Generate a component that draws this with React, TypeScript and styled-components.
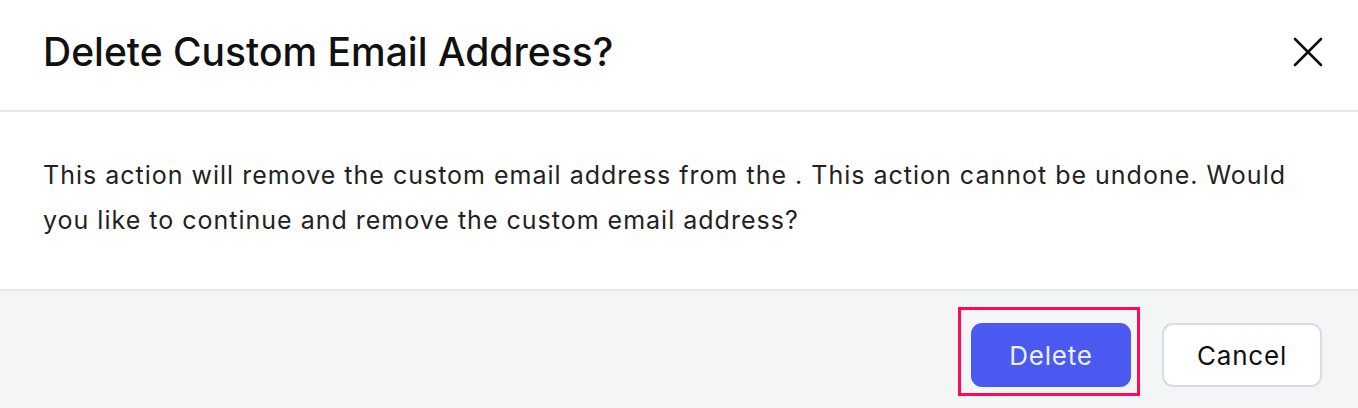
import React from "react";
import styled, { createGlobalStyle } from "styled-components";

const Global = createGlobalStyle`
  html, body { margin: 0; padding: 0; background: #ffffff; }
  body { font-family: Inter, "Noto Sans", sans-serif; -webkit-font-smoothing: antialiased; }
`;

const Dialog = styled.div`
  width: 1358px;
  height: 408px;
  overflow: hidden;
  background: #ffffff;
  display: flex;
  flex-direction: column;
`;

const Header = styled.header`
  height: 112px;
  box-sizing: border-box;
  display: flex;
  align-items: center;
  justify-content: space-between;
  padding: 0 34px 7px 43px;
  border-bottom: 2px solid #e8e8ee;
  flex-shrink: 0;
`;

const Title = styled.h2`
  margin: 0;
  font-family: Inter, "Noto Sans", sans-serif;
  font-weight: 500;
  font-size: 39px;
  letter-spacing: 0;
  color: #111111;
`;

const CloseButton = styled.button`
  width: 32px;
  height: 32px;
  padding: 0;
  border: 0;
  background: transparent;
  display: flex;
  align-items: center;
  justify-content: center;
  cursor: pointer;
  color: #111111;
`;

const Body = styled.div`
  height: 177px;
  box-sizing: border-box;
  padding: 41px 40px 0 43px;
  flex-shrink: 0;
`;

const Message = styled.p`
  margin: 0;
  font-family: Inter, "Noto Sans", sans-serif;
  font-size: 25px;
  line-height: 45px;
  color: #222222;
  letter-spacing: 1px;
`;

const Footer = styled.footer`
  flex: 1;
  background: #f4f5f7;
  border-top: 2px solid #e6e6ea;
  display: flex;
  justify-content: flex-end;
  align-items: flex-start;
  gap: 31px;
  padding: 32px 36px 0 0;
`;

const Highlight = styled.span`
  position: relative;
  display: flex;
  &::after {
    content: "";
    position: absolute;
    top: -16px;
    left: -13px;
    right: -9px;
    bottom: -9px;
    border: 3px solid #ff0a54;
    pointer-events: none;
  }
`;

const Button = styled.button<{ $primary?: boolean }>`
  width: 160px;
  height: 64px;
  box-sizing: border-box;
  border-radius: 11px;
  font-family: Inter, "Noto Sans", sans-serif;
  font-size: 26px;
  font-weight: 400;
  letter-spacing: 0.8px;
  cursor: pointer;
  background: ${(p) => (p.$primary ? "#4a5af0" : "#ffffff")};
  color: ${(p) => (p.$primary ? "#eef0ff" : "#111111")};
  border: ${(p) => (p.$primary ? "none" : "2px solid #d9dce2")};
`;

export default function App() {
  return (
    <>
      <Global />
      <Dialog>
        <Header>
          <Title>Delete Custom Email Address?</Title>
          <CloseButton aria-label="Close">
            <svg width="30" height="30" viewBox="0 0 30 30" fill="none">
              <path
                d="M2 2 L28 28 M28 2 L2 28"
                stroke="currentColor"
                strokeWidth="2.6"
                strokeLinecap="round"
              />
            </svg>
          </CloseButton>
        </Header>
        <Body>
          <Message>
            This action will remove the custom email address from the . This action cannot be undone. Would you like to
            continue and remove the custom email address?
          </Message>
        </Body>
        <Footer>
          <Highlight>
            <Button $primary>Delete</Button>
          </Highlight>
          <Button>Cancel</Button>
        </Footer>
      </Dialog>
    </>
  );
}
